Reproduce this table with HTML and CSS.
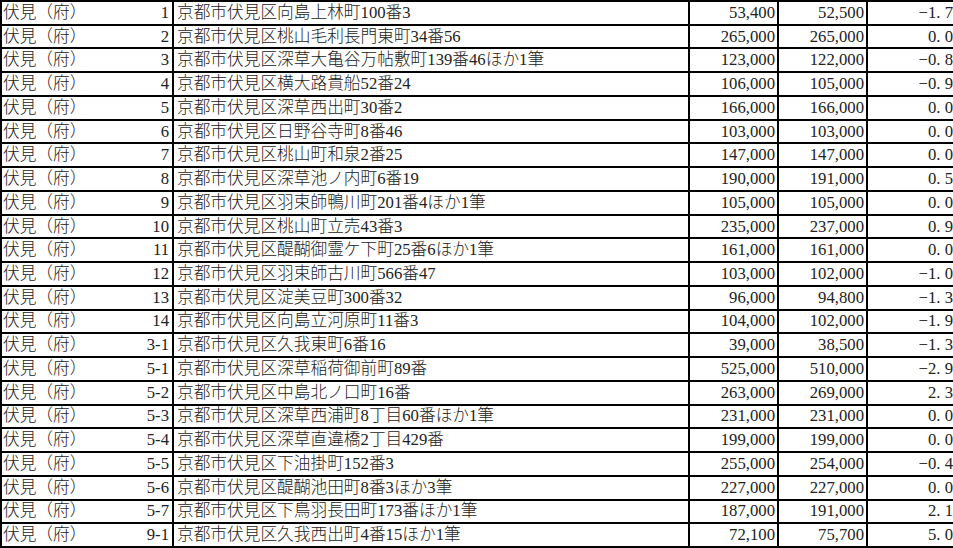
FILE: index.html
```html
<!DOCTYPE html>
<html lang="ja">
<head>
<meta charset="utf-8">
<title>地価一覧</title>
<link rel="stylesheet" href="styles.css">
</head>
<body>
<div class="sheet">
  <div class="row"><div class="c1"><span>伏見（府）</span><span>1</span></div><div class="c2">京都市伏見区向島上林町100番3</div><div class="num">53,400</div><div class="num">52,500</div><div class="num rate">−1<span class="dot">.</span>7</div></div>
  <div class="row"><div class="c1"><span>伏見（府）</span><span>2</span></div><div class="c2">京都市伏見区桃山毛利長門東町34番56</div><div class="num">265,000</div><div class="num">265,000</div><div class="num rate">0<span class="dot">.</span>0</div></div>
  <div class="row"><div class="c1"><span>伏見（府）</span><span>3</span></div><div class="c2">京都市伏見区深草大亀谷万帖敷町139番46ほか1筆</div><div class="num">123,000</div><div class="num">122,000</div><div class="num rate">−0<span class="dot">.</span>8</div></div>
  <div class="row"><div class="c1"><span>伏見（府）</span><span>4</span></div><div class="c2">京都市伏見区横大路貴船52番24</div><div class="num">106,000</div><div class="num">105,000</div><div class="num rate">−0<span class="dot">.</span>9</div></div>
  <div class="row"><div class="c1"><span>伏見（府）</span><span>5</span></div><div class="c2">京都市伏見区深草西出町30番2</div><div class="num">166,000</div><div class="num">166,000</div><div class="num rate">0<span class="dot">.</span>0</div></div>
  <div class="row"><div class="c1"><span>伏見（府）</span><span>6</span></div><div class="c2">京都市伏見区日野谷寺町8番46</div><div class="num">103,000</div><div class="num">103,000</div><div class="num rate">0<span class="dot">.</span>0</div></div>
  <div class="row"><div class="c1"><span>伏見（府）</span><span>7</span></div><div class="c2">京都市伏見区桃山町和泉2番25</div><div class="num">147,000</div><div class="num">147,000</div><div class="num rate">0<span class="dot">.</span>0</div></div>
  <div class="row"><div class="c1"><span>伏見（府）</span><span>8</span></div><div class="c2">京都市伏見区深草池ノ内町6番19</div><div class="num">190,000</div><div class="num">191,000</div><div class="num rate">0<span class="dot">.</span>5</div></div>
  <div class="row"><div class="c1"><span>伏見（府）</span><span>9</span></div><div class="c2">京都市伏見区羽束師鴨川町201番4ほか1筆</div><div class="num">105,000</div><div class="num">105,000</div><div class="num rate">0<span class="dot">.</span>0</div></div>
  <div class="row"><div class="c1"><span>伏見（府）</span><span>10</span></div><div class="c2">京都市伏見区桃山町立売43番3</div><div class="num">235,000</div><div class="num">237,000</div><div class="num rate">0<span class="dot">.</span>9</div></div>
  <div class="row"><div class="c1"><span>伏見（府）</span><span>11</span></div><div class="c2">京都市伏見区醍醐御霊ケ下町25番6ほか1筆</div><div class="num">161,000</div><div class="num">161,000</div><div class="num rate">0<span class="dot">.</span>0</div></div>
  <div class="row"><div class="c1"><span>伏見（府）</span><span>12</span></div><div class="c2">京都市伏見区羽束師古川町566番47</div><div class="num">103,000</div><div class="num">102,000</div><div class="num rate">−1<span class="dot">.</span>0</div></div>
  <div class="row"><div class="c1"><span>伏見（府）</span><span>13</span></div><div class="c2">京都市伏見区淀美豆町300番32</div><div class="num">96,000</div><div class="num">94,800</div><div class="num rate">−1<span class="dot">.</span>3</div></div>
  <div class="row"><div class="c1"><span>伏見（府）</span><span>14</span></div><div class="c2">京都市伏見区向島立河原町11番3</div><div class="num">104,000</div><div class="num">102,000</div><div class="num rate">−1<span class="dot">.</span>9</div></div>
  <div class="row"><div class="c1"><span>伏見（府）</span><span>3-1</span></div><div class="c2">京都市伏見区久我東町6番16</div><div class="num">39,000</div><div class="num">38,500</div><div class="num rate">−1<span class="dot">.</span>3</div></div>
  <div class="row"><div class="c1"><span>伏見（府）</span><span>5-1</span></div><div class="c2">京都市伏見区深草稲荷御前町89番</div><div class="num">525,000</div><div class="num">510,000</div><div class="num rate">−2<span class="dot">.</span>9</div></div>
  <div class="row"><div class="c1"><span>伏見（府）</span><span>5-2</span></div><div class="c2">京都市伏見区中島北ノ口町16番</div><div class="num">263,000</div><div class="num">269,000</div><div class="num rate">2<span class="dot">.</span>3</div></div>
  <div class="row"><div class="c1"><span>伏見（府）</span><span>5-3</span></div><div class="c2">京都市伏見区深草西浦町8丁目60番ほか1筆</div><div class="num">231,000</div><div class="num">231,000</div><div class="num rate">0<span class="dot">.</span>0</div></div>
  <div class="row"><div class="c1"><span>伏見（府）</span><span>5-4</span></div><div class="c2">京都市伏見区深草直違橋2丁目429番</div><div class="num">199,000</div><div class="num">199,000</div><div class="num rate">0<span class="dot">.</span>0</div></div>
  <div class="row"><div class="c1"><span>伏見（府）</span><span>5-5</span></div><div class="c2">京都市伏見区下油掛町152番3</div><div class="num">255,000</div><div class="num">254,000</div><div class="num rate">−0<span class="dot">.</span>4</div></div>
  <div class="row"><div class="c1"><span>伏見（府）</span><span>5-6</span></div><div class="c2">京都市伏見区醍醐池田町8番3ほか3筆</div><div class="num">227,000</div><div class="num">227,000</div><div class="num rate">0<span class="dot">.</span>0</div></div>
  <div class="row"><div class="c1"><span>伏見（府）</span><span>5-7</span></div><div class="c2">京都市伏見区下鳥羽長田町173番ほか1筆</div><div class="num">187,000</div><div class="num">191,000</div><div class="num rate">2<span class="dot">.</span>1</div></div>
  <div class="row"><div class="c1"><span>伏見（府）</span><span>9-1</span></div><div class="c2">京都市伏見区久我西出町4番15ほか1筆</div><div class="num">72,100</div><div class="num">75,700</div><div class="num rate">5<span class="dot">.</span>0</div></div>
</div>
</body>
</html>
```

FILE: styles.css
```css
html, body {
  margin: 0;
  padding: 0;
  background: #ffffff;
  overflow: hidden;
}

.sheet {
  width: 953px;
  height: 548px;
  box-sizing: border-box;
  background: #000000;
  padding: 2px 0 2px 2px;
  display: grid;
  grid-template-rows: repeat(23, 1fr);
  row-gap: 2px;
  font-family: "Liberation Serif", "Noto Sans CJK JP", serif;
  font-size: 16.7px;
  font-weight: 300;
  color: #222222;
}

.row {
  display: grid;
  grid-template-columns: 170px 514px 87px 87px 85px;
  column-gap: 2px;
}

.row > div {
  background: #ffffff;
  display: flex;
  align-items: center;
  line-height: 18px;
  white-space: nowrap;
  overflow: hidden;
}

.c1 {
  justify-content: space-between;
  padding: 0 3px 0 1px;
}

.c2 {
  padding-left: 3px;
}

.num {
  justify-content: flex-end;
  padding-right: 2px;
}

.rate {
  padding-right: 0;
}

.dot {
  display: inline-block;
  width: 0.5em;
  text-align: left;
}
```
